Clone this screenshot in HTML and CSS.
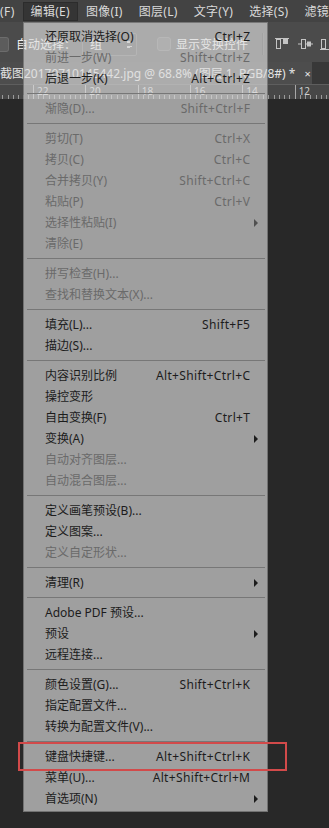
FILE: index.html
```html
<!DOCTYPE html>
<html lang="zh-CN">
<head>
    <meta charset="UTF-8">
    <title>编辑菜单</title>
    <link rel="stylesheet" href="styles.css">
</head>
<body>

<div class="app">
    <ul class="menubar">
        <li>(F)</li>
        <li class="active">编辑(E)</li>
        <li>图像(I)</li>
        <li>图层(L)</li>
        <li>文字(Y)</li>
        <li>选择(S)</li>
        <li>滤镜(T)</li>
    </ul>

    <div class="options">
        <span class="stub"></span>
        <span class="label">自动选择：</span>
        <span class="select">组<i class="updown"></i></span>
        <span class="check"></span>
        <span class="label wide">显示变换控件</span>
        <span class="vline"></span>
        <svg class="align" width="14" height="12" viewBox="0 0 14 12">
            <path d="M0 0.5H14" stroke="#c4c4c4"/>
            <rect x="1.5" y="1.5" width="4" height="9" fill="none" stroke="#c4c4c4"/>
            <rect x="8" y="1" width="5" height="5" fill="#c4c4c4"/>
        </svg>
        <svg class="align" width="15" height="12" viewBox="0 0 15 12">
            <path d="M0 6H15" stroke="#c4c4c4"/>
            <rect x="3.5" y="1.5" width="4" height="9" fill="#4b4b4b" stroke="#c4c4c4"/>
            <rect x="9" y="3.5" width="4" height="5" fill="#c4c4c4"/>
        </svg>
        <svg class="align" width="14" height="12" viewBox="0 0 14 12">
            <path d="M0 11.5H14" stroke="#c4c4c4"/>
            <rect x="1.5" y="1.5" width="4" height="9" fill="none" stroke="#c4c4c4"/>
        </svg>
    </div>

    <div class="tabbar">
        <div class="tab">截图20170710145442.jpg @ 68.8% (图层 1, RGB/8#) *<span class="close">×</span></div>
    </div>

    <div class="ruler">
        <span class="lead"></span>
        <span class="mark-cell">22</span>
        <span class="mark-cell">20</span>
        <span class="mark-cell">18</span>
        <span class="mark-cell">16</span>
        <span class="mark-cell">14</span>
        <span class="mark-cell">12</span>
    </div>

    <div class="canvas"></div>

    <ul class="dropdown">
        <li class="item"><span>还原取消选择(O)</span><span class="key">Ctrl+Z</span></li>
        <li class="item off"><span>前进一步(W)</span><span class="key">Shift+Ctrl+Z</span></li>
        <li class="item"><span>后退一步(K)</span><span class="key">Alt+Ctrl+Z</span></li>
        <li class="sep"></li>
        <li class="item off"><span>渐隐(D)...</span><span class="key">Shift+Ctrl+F</span></li>
        <li class="sep"></li>
        <li class="item off"><span>剪切(T)</span><span class="key">Ctrl+X</span></li>
        <li class="item off"><span>拷贝(C)</span><span class="key">Ctrl+C</span></li>
        <li class="item off"><span>合并拷贝(Y)</span><span class="key">Shift+Ctrl+C</span></li>
        <li class="item off"><span>粘贴(P)</span><span class="key">Ctrl+V</span></li>
        <li class="item off"><span>选择性粘贴(I)</span><i class="arrow"></i></li>
        <li class="item off"><span>清除(E)</span></li>
        <li class="sep"></li>
        <li class="item off"><span>拼写检查(H)...</span></li>
        <li class="item off"><span>查找和替换文本(X)...</span></li>
        <li class="sep"></li>
        <li class="item"><span>填充(L)...</span><span class="key">Shift+F5</span></li>
        <li class="item"><span>描边(S)...</span></li>
        <li class="sep"></li>
        <li class="item"><span>内容识别比例</span><span class="key">Alt+Shift+Ctrl+C</span></li>
        <li class="item"><span>操控变形</span></li>
        <li class="item"><span>自由变换(F)</span><span class="key">Ctrl+T</span></li>
        <li class="item"><span>变换(A)</span><i class="arrow"></i></li>
        <li class="item off"><span>自动对齐图层...</span></li>
        <li class="item off"><span>自动混合图层...</span></li>
        <li class="sep"></li>
        <li class="item"><span>定义画笔预设(B)...</span></li>
        <li class="item"><span>定义图案...</span></li>
        <li class="item off"><span>定义自定形状...</span></li>
        <li class="sep"></li>
        <li class="item"><span>清理(R)</span><i class="arrow"></i></li>
        <li class="sep"></li>
        <li class="item"><span>Adobe PDF 预设...</span></li>
        <li class="item"><span>预设</span><i class="arrow"></i></li>
        <li class="item"><span>远程连接...</span></li>
        <li class="sep"></li>
        <li class="item"><span>颜色设置(G)...</span><span class="key">Shift+Ctrl+K</span></li>
        <li class="item"><span>指定配置文件...</span></li>
        <li class="item"><span>转换为配置文件(V)...</span></li>
        <li class="sep"></li>
        <li class="item"><span>键盘快捷键...</span><span class="key">Alt+Shift+Ctrl+K</span></li>
        <li class="item"><span>菜单(U)...</span><span class="key">Alt+Shift+Ctrl+M</span></li>
        <li class="item"><span>首选项(N)</span><i class="arrow"></i></li>
    </ul>

    <div class="highlight"></div>
</div>

</body>
</html>
```

FILE: styles.css
```css
* {
    margin: 0;
    padding: 0;
    box-sizing: border-box;
}

ul {
    list-style: none;
}

body {
    width: 329px;
    height: 828px;
    overflow: hidden;
    background: #282828;
    font-family: "Noto Sans", "Noto Sans CJK SC", sans-serif;
    font-size: 12px;
}

.app {
    position: relative;
    display: flex;
    flex-direction: column;
    height: 828px;
    overflow: hidden;
}

/* 顶部菜单栏 */
.menubar {
    display: flex;
    align-items: center;
    height: 22px;
    background: #434343;
    color: #dadada;
    letter-spacing: 0.3px;
    white-space: nowrap;
}

.menubar li {
    padding: 0 8px;
    line-height: 17px;
}

.menubar li:first-child {
    padding-left: 0;
}

.menubar li.active {
    padding: 0 7px;
    background: #353535;
    border: 1px solid #2c2c2c;
}

/* 选项栏 */
.options {
    display: flex;
    align-items: center;
    height: 40px;
    padding-top: 4px;
    background: #4b4b4b;
    color: #f4f4f4;
    white-space: nowrap;
}

.stub {
    flex: none;
    width: 9px;
    height: 15px;
    background: #5c5c5c;
    border: 1px solid #6c6c6c;
    border-left: none;
    border-radius: 0 3px 3px 0;
    margin-right: 7px;
}

.label {
    flex: none;
    width: 60px;
}

.label.wide {
    width: 86px;
}

.select {
    flex: none;
    display: flex;
    align-items: center;
    justify-content: space-between;
    width: 55px;
    height: 23px;
    margin-left: 6px;
    padding: 0 4px 0 7px;
    background: #454545;
    border: 1px solid #666666;
    border-radius: 2px;
}

.updown {
    width: 6px;
    height: 9px;
    background:
        linear-gradient(to bottom right, transparent 50%, #c8c8c8 50%) left top / 3px 3px no-repeat,
        linear-gradient(to bottom left, transparent 50%, #c8c8c8 50%) right top / 3px 3px no-repeat,
        linear-gradient(to top right, transparent 50%, #c8c8c8 50%) left bottom / 3px 3px no-repeat,
        linear-gradient(to top left, transparent 50%, #c8c8c8 50%) right bottom / 3px 3px no-repeat;
}

.check {
    flex: none;
    width: 14px;
    height: 14px;
    margin: 0 5px 0 20px;
    background: #5a5a5a;
    border: 1px solid #6e6e6e;
    border-radius: 3px;
}

.vline {
    flex: none;
    width: 1px;
    height: 22px;
    margin-right: 12px;
    background: #343434;
    box-shadow: 1px 0 0 #5a5a5a;
}

.align {
    flex: none;
    margin-right: 9px;
}

.align + .align {
    margin-right: 7px;
}

/* 文档标签 */
.tabbar {
    display: flex;
    height: 22px;
    background: #383838;
}

.tab {
    display: flex;
    align-items: center;
    width: 312px;
    background: #4d4d4d;
    color: #e4e4e4;
    white-space: nowrap;
}

.close {
    margin-left: 9px;
    font-size: 11px;
    color: #e8e8e8;
}

/* 标尺 */
.ruler {
    display: flex;
    height: 15px;
    background-color: #474747;
    background-image: repeating-linear-gradient(to right, #9a9a9a 0 1px, transparent 1px 5.233px);
    background-size: 100% 4px;
    background-position: 33px bottom;
    background-repeat: repeat-x;
    border-top: 1px solid #5e5e5e;
    color: #cfcfcf;
    font-size: 10px;
    line-height: 10px;
}

.ruler .lead {
    flex: none;
    width: 33px;
}

.mark-cell {
    flex: none;
    width: 52.33px;
    padding: 1px 0 0 3px;
    border-left: 1px solid #a8a8a8;
}

.canvas {
    flex: 1;
    background: #282828;
}

/* 编辑下拉菜单 */
.dropdown {
    position: absolute;
    left: 23px;
    top: 22px;
    width: 245px;
    padding: 3px 0 2px;
    background: rgba(222, 222, 222, 0.66);
    border: 1px solid rgba(70, 70, 70, 0.5);
    color: #1c1c1c;
}

.item {
    display: grid;
    grid-template-columns: 1fr auto 17px;
    height: 21px;
    line-height: 21px;
    padding-left: 21px;
    white-space: nowrap;
}

.item .key {
    grid-column: 2;
    letter-spacing: 0.35px;
    margin-right: -0.35px;
}

.item .arrow {
    grid-column: 3;
    align-self: center;
    width: 0;
    height: 0;
    margin-left: 4px;
    border-left: 4px solid #1c1c1c;
    border-top: 4px solid transparent;
    border-bottom: 4px solid transparent;
}

.item.off {
    color: #6a6a6a;
}

.item.off .arrow {
    border-left-color: #505050;
}

.sep {
    height: 1px;
    margin: 4px 2px 4px 3px;
    background: #777777;
}

.highlight {
    position: absolute;
    left: 18px;
    top: 742px;
    width: 269px;
    height: 29px;
    border: 2px solid #d24a4a;
}
```
